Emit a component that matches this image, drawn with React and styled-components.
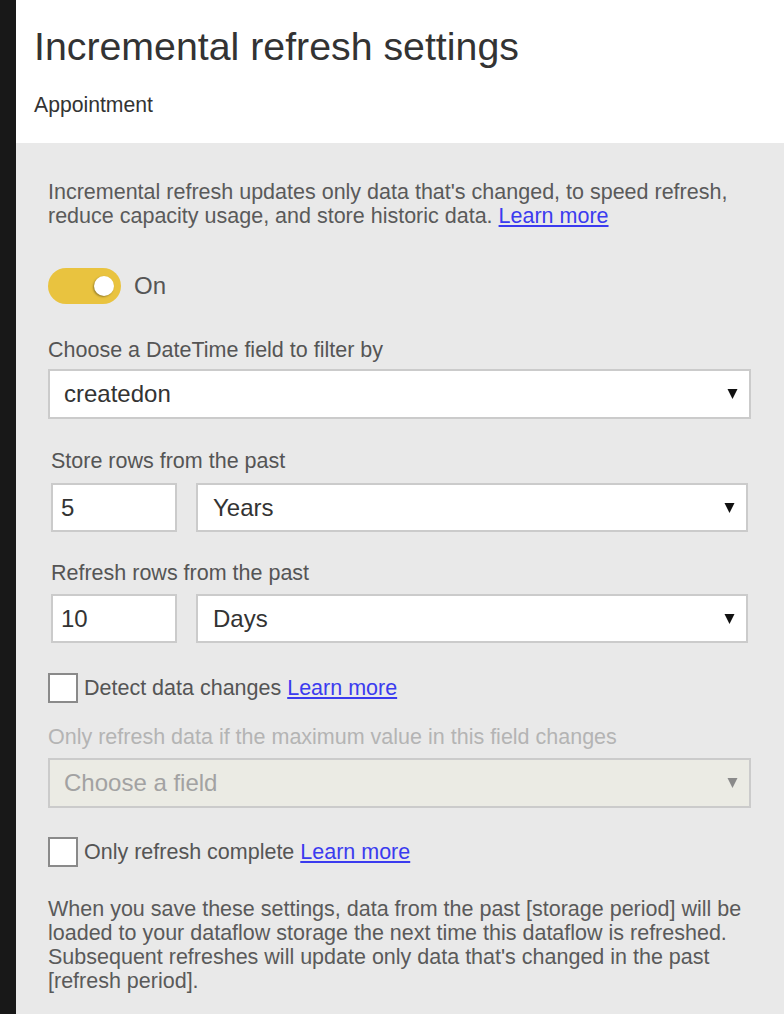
import styled, { createGlobalStyle } from "styled-components";

const Global = createGlobalStyle`
  html, body {
    margin: 0;
    padding: 0;
    background: #e9e9e9;
  }
  body {
    font-family: "Liberation Sans", Arial, sans-serif;
  }
`;

const Page = styled.div`
  display: flex;
  min-height: 1014px;
`;

const Rail = styled.div`
  width: 16px;
  flex-shrink: 0;
  background: #181818;
`;

const Panel = styled.div`
  flex: 1;
  display: flex;
  flex-direction: column;
  background: #e9e9e9;
`;

const Header = styled.header`
  height: 143px;
  box-sizing: border-box;
  background: #fff;
  padding: 22px 0 0 18px;
`;

const Title = styled.h1`
  margin: 0;
  font-size: 39.3px;
  line-height: 48px;
  font-weight: 400;
  color: #333;
`;

const Subtitle = styled.div`
  margin-top: 23px;
  font-size: 21.2px;
  line-height: 24px;
  color: #333;
`;

const Body = styled.div`
  padding: 37px 33px 0 32px;
  display: flex;
  flex-direction: column;
`;

const Text = styled.p`
  margin: ${(p) => p.$top || 0}px 0 0;
  font-size: 21.5px;
  line-height: 24px;
  color: #5a5a5a;
`;

const Link = styled.a`
  color: #3b3bef;
  text-decoration: underline;
  cursor: pointer;
`;

const SwitchRow = styled.div`
  margin-top: 40px;
  display: flex;
  align-items: center;
  gap: 13px;
`;

const Track = styled.div`
  width: 73px;
  height: 36px;
  border-radius: 18px;
  background: #e9c33f;
  display: flex;
  align-items: center;
  justify-content: flex-end;
  padding-right: 7px;
  box-sizing: border-box;
`;

const Knob = styled.div`
  width: 20px;
  height: 20px;
  border-radius: 50%;
  background: #fff;
  box-shadow: -1px 1px 2px rgba(0, 0, 0, 0.35);
`;

const SwitchLabel = styled.span`
  font-size: 24px;
  color: #555;
`;

const Label = styled.div`
  margin: ${(p) => p.$top}px 0 0 ${(p) => p.$indent || 0}px;
  font-size: 21.5px;
  line-height: 24px;
  color: ${(p) => (p.$muted ? "#b4b4b4" : "#555")};
`;

const Row = styled.div`
  margin: ${(p) => p.$top}px 3px 0;
  display: flex;
  gap: 19px;
`;

const Box = styled.div`
  box-sizing: border-box;
  height: ${(p) => p.$h || 50}px;
  margin-top: ${(p) => p.$top || 0}px;
  border: 2px solid #cbcbcb;
  background: ${(p) => (p.$disabled ? "#ebebe4" : "#fff")};
  display: flex;
  align-items: center;
  justify-content: space-between;
  padding: 0 11px 0 14px;
  font-size: 24px;
  color: ${(p) => (p.$disabled ? "#a2a2a2" : "#333")};
`;

const NumberBox = styled(Box)`
  width: 126px;
  flex-shrink: 0;
  padding-left: 8px;
`;

const SelectBox = styled(Box)`
  flex: 1;
  padding-left: 15px;
`;

const CheckRow = styled.div`
  margin-top: ${(p) => p.$top}px;
  display: flex;
  align-items: center;
  gap: 6px;
  font-size: 21.5px;
  color: #555;
`;

const Check = styled.div`
  width: 30px;
  height: 30px;
  box-sizing: border-box;
  border: 2px solid #8a8a8a;
  background: #fff;
`;

function Arrow({ color = "#111" }) {
  return (
    <svg width="11" height="12" viewBox="0 0 11 12">
      <polygon points="0.5,1 10.5,1 5.5,11" fill={color} />
    </svg>
  );
}

export default function App() {
  return (
    <Page>
      <Global />
      <Rail />
      <Panel>
        <Header>
          <Title>Incremental refresh settings</Title>
          <Subtitle>Appointment</Subtitle>
        </Header>
        <Body>
          <Text>
            Incremental refresh updates only data that's changed, to speed refresh,
            reduce capacity usage, and store historic data. <Link>Learn more</Link>
          </Text>

          <SwitchRow>
            <Track>
              <Knob />
            </Track>
            <SwitchLabel>On</SwitchLabel>
          </SwitchRow>

          <Label $top={34}>Choose a DateTime field to filter by</Label>
          <Box $top={7}>
            <span>createdon</span>
            <Arrow />
          </Box>

          <Label $top={30} $indent={3}>Store rows from the past</Label>
          <Row $top={10}>
            <NumberBox $h={49}>5</NumberBox>
            <SelectBox $h={49}>
              <span>Years</span>
              <Arrow />
            </SelectBox>
          </Row>

          <Label $top={29} $indent={3}>Refresh rows from the past</Label>
          <Row $top={9}>
            <NumberBox $h={49}>10</NumberBox>
            <SelectBox $h={49}>
              <span>Days</span>
              <Arrow />
            </SelectBox>
          </Row>

          <CheckRow $top={30}>
            <Check />
            <span>
              Detect data changes <Link>Learn more</Link>
            </span>
          </CheckRow>

          <Label $top={22} $muted>
            Only refresh data if the maximum value in this field changes
          </Label>
          <Box $top={9} $disabled>
            <span>Choose a field</span>
            <Arrow color="#8a8a8a" />
          </Box>

          <CheckRow $top={29}>
            <Check />
            <span>
              Only refresh complete <Link>Learn more</Link>
            </span>
          </CheckRow>

          <Text $top={30}>
            When you save these settings, data from the past [storage period] will be
            loaded to your dataflow storage the next time this dataflow is refreshed.
            Subsequent refreshes will update only data that's changed in the past
            [refresh period].
          </Text>
        </Body>
      </Panel>
    </Page>
  );
}
